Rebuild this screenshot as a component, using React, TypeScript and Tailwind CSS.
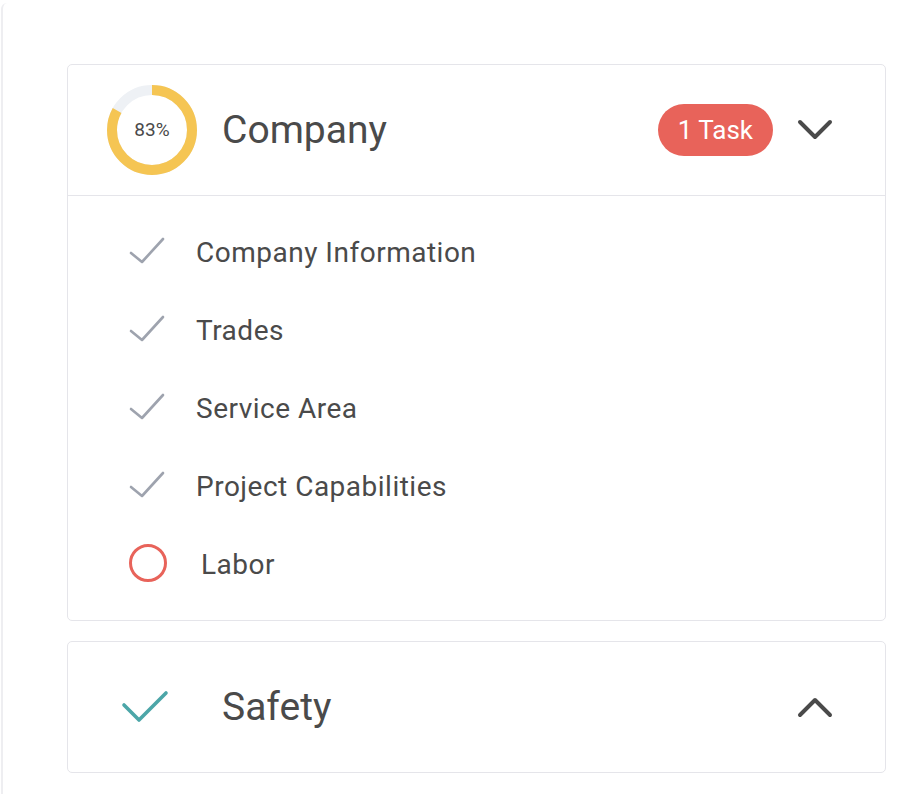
import { ReactNode } from 'react';

const FONT = { fontFamily: 'Roboto, "Noto Sans", Arial, sans-serif' };

type Step = { label: string; done: boolean };

const STEPS: Step[] = [
  { label: 'Company Information', done: true },
  { label: 'Trades', done: true },
  { label: 'Service Area', done: true },
  { label: 'Project Capabilities', done: true },
  { label: 'Labor', done: false },
];

function Donut({ percent }: { percent: number }) {
  const r = 40;
  const c = 2 * Math.PI * r;
  return (
    <div className="relative w-[90px] h-[90px] shrink-0">
      <svg width="90" height="90" viewBox="0 0 90 90" className="-rotate-90">
        <circle cx="45" cy="45" r={r} fill="none" stroke="#eef1f5" strokeWidth="10" />
        <circle
          cx="45"
          cy="45"
          r={r}
          fill="none"
          stroke="#f5c553"
          strokeWidth="10"
          strokeDasharray={`${(c * percent) / 100} ${c}`}
        />
      </svg>
      <span className="absolute inset-0 flex items-center justify-center text-[19px] text-[#4a4a4a]">
        {percent}%
      </span>
    </div>
  );
}

function Chevron({ up }: { up?: boolean }) {
  return (
    <svg width="40" height="24" viewBox="0 0 40 24" className="shrink-0">
      <path
        d={up ? 'M5 20 L20 5 L35 20' : 'M5 4 L20 19 L35 4'}
        fill="none"
        stroke="#4a4a4a"
        strokeWidth="4"
        strokeLinecap="round"
        strokeLinejoin="round"
      />
    </svg>
  );
}

function StepIcon({ done }: { done: boolean }) {
  if (done) {
    return (
      <svg width="40" height="30" viewBox="0 0 40 30" className="shrink-0">
        <path
          d="M2 16 L13 25 L34 2"
          fill="none"
          stroke="#9ea3ae"
          strokeWidth="2.6"
          strokeLinecap="round"
          strokeLinejoin="round"
        />
      </svg>
    );
  }
  return (
    <svg width="40" height="40" viewBox="0 0 40 40" className="shrink-0">
      <circle cx="19" cy="19" r="17.5" fill="none" stroke="#e8635a" strokeWidth="3" />
    </svg>
  );
}

function Card({ children }: { children: ReactNode }) {
  return <div className="border border-[#e5e5ea] rounded-[5px] bg-white">{children}</div>;
}

export default function App() {
  return (
    <div style={FONT} className="min-h-screen bg-white ml-[1px] border-l-2 border-[#eeeef1] rounded-tl-[6px] mt-[3px]">
      <div className="pl-[64px] pr-[20px] pt-[61px] flex flex-col gap-[20px]">
        <Card>
          <div className="h-[131px] flex items-center pl-[39px] pr-[50px] border-b border-[#e5e5ea]">
            <Donut percent={83} />
            <span className="ml-[25px] text-[39px] text-[#4a4a4a] flex-1">Company</span>
            <span className="h-[52px] px-[20px] rounded-full bg-[#e8635a] text-white text-[26px] flex items-center">
              1 Task
            </span>
            <span className="ml-[22px]">
              <Chevron />
            </span>
          </div>
          <div className="py-[17px]">
            {STEPS.map((s) => (
              <div key={s.label} className="h-[78px] flex items-center pl-[61px]">
                <div className="w-[67px] flex items-center">
                  <StepIcon done={s.done} />
                </div>
                <span
                  className={`pt-[2px] text-[28px] tracking-[0.5px] text-[#4a4a4a] ${s.done ? '' : 'ml-[5px]'}`}
                >
                  {s.label}
                </span>
              </div>
            ))}
          </div>
        </Card>
        <Card>
          <div className="h-[130px] flex items-center pl-[53px] pr-[50px]">
            <svg width="48" height="34" viewBox="0 0 48 34" className="shrink-0">
              <path
                d="M3 15 L18 30 L45 3"
                fill="none"
                stroke="#4ca6a8"
                strokeWidth="3.6"
                strokeLinecap="round"
                strokeLinejoin="round"
              />
            </svg>
            <span className="ml-[53px] text-[39px] text-[#4a4a4a] flex-1">Safety</span>
            <Chevron up />
          </div>
        </Card>
      </div>
    </div>
  );
}
